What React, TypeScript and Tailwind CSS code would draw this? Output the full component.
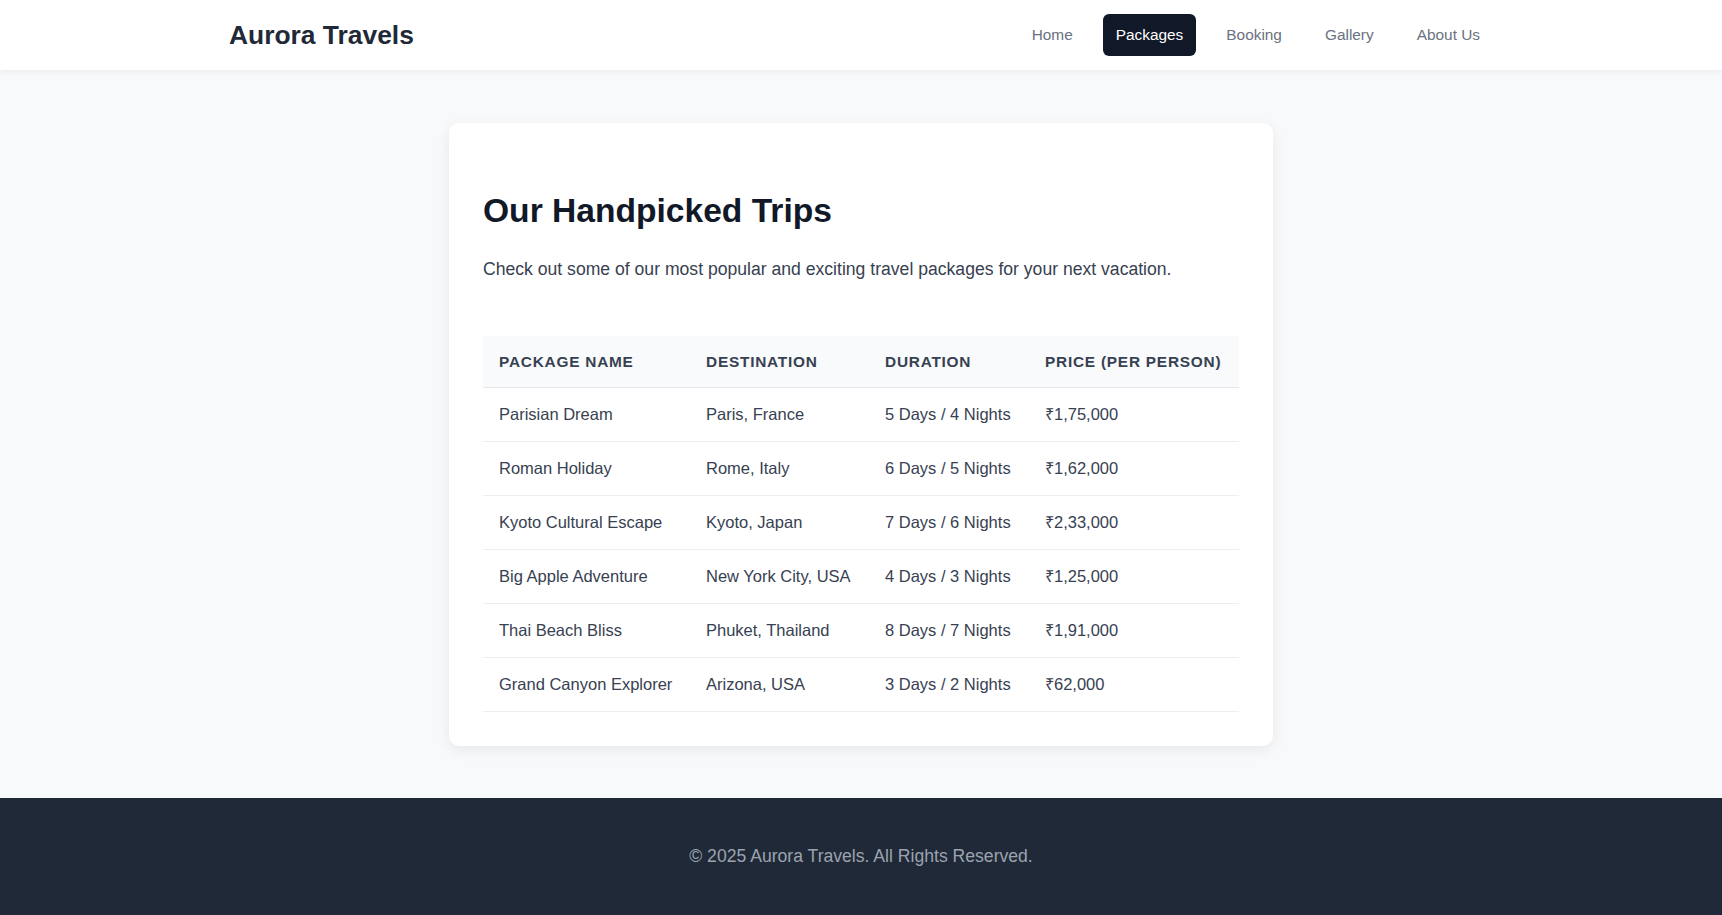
import React from "react";

const rows = [
  ["Parisian Dream", "Paris, France", "5 Days / 4 Nights", "₹1,75,000"],
  ["Roman Holiday", "Rome, Italy", "6 Days / 5 Nights", "₹1,62,000"],
  ["Kyoto Cultural Escape", "Kyoto, Japan", "7 Days / 6 Nights", "₹2,33,000"],
  ["Big Apple Adventure", "New York City, USA", "4 Days / 3 Nights", "₹1,25,000"],
  ["Thai Beach Bliss", "Phuket, Thailand", "8 Days / 7 Nights", "₹1,91,000"],
  ["Grand Canyon Explorer", "Arizona, USA", "3 Days / 2 Nights", "₹62,000"],
];

const nav = ["Home", "Packages", "Booking", "Gallery", "About Us"];

export default function App() {
  return (
    <div className="min-h-screen bg-[#f8f9fa] font-['Liberation_Sans',Arial,sans-serif]">
      <header className="h-[70px] bg-white shadow-[0_2px_6px_rgba(0,0,0,0.06)] relative z-10">
        <div className="max-w-7xl mx-auto px-2 h-full flex items-center justify-between">
          <div className="text-[26.4px] font-bold text-[#1f2937] leading-none">Aurora Travels</div>
          <nav className="flex items-center gap-[17px]">
            {nav.map((n) => (
              <a
                key={n}
                className={
                  n === "Packages"
                    ? "px-[13px] h-[42px] flex items-center rounded-md bg-[#111827] text-white text-[15.4px]"
                    : "px-[13px] h-[42px] flex items-center rounded-md text-[#6b7280] text-[15.4px]"
                }
              >
                {n}
              </a>
            ))}
          </nav>
        </div>
      </header>

      <main className="pt-[53px] pb-[52px]">
        <div className="w-[824px] mx-auto bg-white rounded-[10px] shadow-[0_4px_14px_rgba(0,0,0,0.07)] px-[34px] pt-[68px] pb-[34px]">
          <h1 className="text-[33.6px] font-bold text-[#111827] leading-[40px]">Our Handpicked Trips</h1>
          <p className="mt-[25px] text-[17.6px] text-[#374151] leading-[27px]">
            Check out some of our most popular and exciting travel packages for your next vacation.
          </p>
          <table className="w-full mt-[53px] border-collapse text-left">
            <thead>
              <tr className="bg-[#f9fafb] border-b border-[#e5e7eb]">
                <th className="w-[207px] h-[51px] px-4 text-[15.4px] font-bold tracking-wider text-[#374151]">PACKAGE NAME</th>
                <th className="w-[179px] h-[51px] px-4 text-[15.4px] font-bold tracking-wider text-[#374151]">DESTINATION</th>
                <th className="w-[160px] h-[51px] px-4 text-[15.4px] font-bold tracking-wider text-[#374151]">DURATION</th>
                <th className="h-[51px] px-4 text-[15.4px] font-bold tracking-wider text-[#374151] whitespace-nowrap">PRICE (PER PERSON)</th>
              </tr>
            </thead>
            <tbody>
              {rows.map((r) => (
                <tr key={r[0]} className="border-b border-[#eceef1]">
                  {r.map((c, i) => (
                    <td key={i} className="h-[54px] px-4 text-[16.5px] text-[#374151] whitespace-nowrap">
                      {c}
                    </td>
                  ))}
                </tr>
              ))}
            </tbody>
          </table>
        </div>
      </main>

      <footer className="bg-[#1f2937] pt-[46px] pb-[60px] text-center">
        <p className="text-[17.6px] leading-6 text-[#9ca3af]">© 2025 Aurora Travels. All Rights Reserved.</p>
      </footer>
    </div>
  );
}
